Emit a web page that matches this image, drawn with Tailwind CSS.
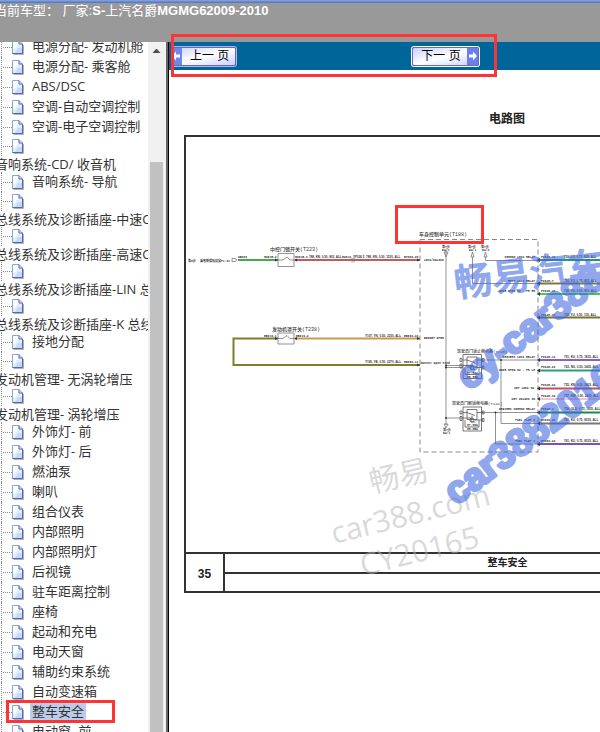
<!DOCTYPE html>
<html lang="zh-CN">
<head>
<meta charset="utf-8">
<meta name="viewport" content="width=device-width, initial-scale=1">
<title>整车安全 - 电路图</title>
<script src="https://cdn.jsdelivr.net/npm/@tailwindcss/browser@4"></script>
</head>
<body class="relative flex h-screen flex-col overflow-hidden bg-white font-['Open_Sans','Noto_Sans_CJK_SC',sans-serif] text-[13px] text-[#333]">

<header class="h-[42px] shrink-0 overflow-hidden bg-[#999] text-white">
  <div class="h-[3px] bg-linear-to-b from-[#8ba6dc] to-[#4a72c8]"></div>
  <h1 class="-ml-[6px] whitespace-pre font-['Liberation_Sans','Noto_Sans_CJK_SC',sans-serif] text-[13px] leading-[15px]">当前车型： 厂家:<b>S-</b>上汽名爵<b>MGMG62009-2010</b></h1>
</header>

<div class="flex min-h-0 flex-1">
  <nav aria-label="目录" class="flex w-[169px] shrink-0 overflow-hidden">
    <ul id="tree" class="-mt-[5px] min-w-0 flex-1 overflow-hidden whitespace-nowrap"></ul>
    <div class="flex w-[18px] shrink-0 flex-col bg-[#f1f1f1] pl-[2px] pr-[3px]" aria-hidden="true">
      <svg class="mt-[6px] h-[5px] w-[13px] shrink-0" viewBox="0 0 13 5"><path d="M2.500 5 6 1h1l3.500 4z" fill="#505050"/></svg>
      <div class="mt-[109px] flex-1 bg-[#c1c1c1]"></div>
    </div>
    <div class="w-[3px] shrink-0 border-r border-black bg-[#666]"></div>
  </nav>

  <main class="min-w-0 flex-1 overflow-hidden">
    <div class="flex h-7 items-center bg-[#069]">
      <button class="ml-[3px] flex h-[19px] items-center overflow-hidden rounded-xs border border-[#6a6ab4] bg-linear-to-br from-[#c9d0fa] via-white to-[#c9d0fa] font-['Liberation_Sans','Noto_Sans_CJK_SC',sans-serif] text-[12px] text-black ring-1 ring-[#b4b4e4]">
        <svg class="h-[18px] w-[9px]" viewBox="0 0 9 18"><path fill="#7088ec" d="M0 0h9v18H0z"/><path fill="#fff" d="M0 8l3-3.500V7.500h4v3H3v3L0 10z"/></svg>
        <span class="whitespace-pre pl-[8px] pr-[6px]">上一 页</span>
      </button>
      <button class="ml-[176px] flex h-[19px] items-center overflow-hidden rounded-xs border border-[#6a6ab4] bg-linear-to-br from-[#c9d0fa] via-white to-[#c9d0fa] font-['Liberation_Sans','Noto_Sans_CJK_SC',sans-serif] text-[12px] text-black ring-1 ring-white">
        <span class="whitespace-pre pl-[8px] pr-[6px]">下一 页</span>
        <svg class="h-[18px] w-[11px]" viewBox="0 0 11 18"><path fill="#6a80ec" d="M0 0h11v18H0z"/><path fill="#fff" d="M10 9 6 4.500v3H2v3h4v3z"/></svg>
      </button>
    </div>

    <article class="ml-[15px] w-[646px] font-['Liberation_Sans','Noto_Sans_CJK_SC',sans-serif] text-[#222]">
      <h2 class="pb-[7px] pt-[40px] text-center text-[12px] font-bold leading-[18px]">电路图</h2>
      <div class="border-2 border-[#333]">
        <svg class="block w-full" viewBox="186 137 642 415" role="img" aria-label="整车安全电路图" font-family="'Liberation Mono','Noto Sans CJK SC',monospace" font-size="3" font-weight="bold" fill="#333">
          <!-- wires -->
          <g fill="none" stroke-width="2">
            <path stroke="#3fae49" d="M238 260h40"/>
            <path stroke="#c45a5a" d="M295 260h125"/>
            <path stroke="#827b2c" d="M278 338.500h-44.500V365H420"/>
            <path stroke="#c99a55" d="M295 338.500h125"/>
            <path stroke="#1f9a78" d="M539 260h260"/>
            <path stroke="#7c7c38" d="M539 283.500h260"/>
            <path stroke="#48cc48" d="M539 294h260"/>
            <path stroke="#7c7432" d="M539 317.500h260"/>
            <path stroke="#8a62b8" d="M539 360h260"/>
            <path stroke="#2e9c78" d="M539 370.500h260"/>
            <path stroke="#c4505c" d="M539 388.500h260"/>
            <path stroke="#ecc4dc" d="M539 399h260"/>
            <path stroke="#1c8a44" d="M539 412.500h260"/>
            <path stroke="#777" d="M539 423.500h260"/>
            <path stroke="#7c54b0" d="M539 444h260"/>
          </g>
          <rect x="420" y="239.500" width="118" height="212.500" fill="none" stroke="#888" stroke-dasharray="5 3"/>
          <!-- internal connections -->
          <g fill="none" stroke="#777" stroke-width=".8">
            <path d="M446 250v175M444 252h4l-2 5zM444 424h4l-2 4z"/>
            <path d="M472.500 257v26.500H538M485.500 257v3.500H538"/>
            <path fill="#fff" d="M471 257h3l-1.500-5zM484 257h3l-1.500-5z"/>
            <path d="M446 365.500h17M446 367.500h17M446 418h17M481 360h57M501 360v63.500h37M481 412.500h57M495.500 412.500V444H538"/>
            <path d="M278 253.500h16v13h-16zM278 260h5l4-3 3 3h4M278 333h16v11h-16zM278 338.500h5l4-3 3 3h4"/>
            <path d="M232 258.500h3l2 1.500-2 1.500h-3zM352 257.500v5M354 257.500v5"/>
          </g>
          <g fill="#333">
            <circle cx="446" cy="365.500" r="1"/><circle cx="446" cy="367.500" r="1"/><circle cx="446" cy="418" r="1"/><circle cx="495.500" cy="412.500" r="1"/><circle cx="501" cy="360" r="1"/>
            <path d="M275 258.500l3 1.500-3 1.500zM297 258.500l-3 1.500 3 1.500zM275 337l3 1.500-3 1.500zM297 337l-3 1.500 3 1.500zM417 258.500l3 1.500-3 1.500zM417 337l3 1.500-3 1.500zM417 363.500l3 1.500-3 1.500z"/>
            <path d="M537 260l3-2v4zM537 283.500l3-2v4zM537 294l3-2v4zM537 317.500l3-2v4zM537 360l3-2v4zM537 370.500l3-2v4zM537 388.500l3-2v4zM537 399l3-2v4zM537 412.500l3-2v4zM537 423.500l3-2v4zM537 444l3-2v4z"/>
          </g>
          <!-- relays -->
          <g id="relay" fill="none" stroke="#555" stroke-width=".8">
            <path d="M463 354.500h18.500v24H463zM467 357h10v10h-10zM463 360h4l8 3M477 360h6M463 365.500h8v4h4M475 367.500h8M465 367.500v7h14v-7M472 363v4M460 358.500h2v3h-2zM460 364h2v4h-2zM482 358.500h2v3h-2zM482 366h2v3h-2z"/>
            <circle cx="472" cy="367.500" r="2"/>
          </g>
          <use href="#relay" y="52.500"/>
          <text x="467" y="373.500">87.86A</text><text x="467" y="377.500">88.85A</text>
          <text x="467" y="426">87.86A</text><text x="467" y="430">88.85A</text>
          <!-- component names -->
          <g font-size="5" font-weight="500">
            <text x="270" y="251">中控门锁开关(T223)</text>
            <text x="272" y="331">发动机罩开关(T238)</text>
            <text x="419" y="236">车身控制单元(T188)</text>
          </g>
          <g font-size="4" font-weight="500">
            <text x="457" y="352.500">驾驶员门锁止继电器(T240)</text>
            <text x="452" y="405">驾驶员门解锁继电器(T241)</text>
          </g>
          <!-- pin labels -->
          <text x="188" y="261.500">第9页</text><text x="200" y="261.500">乘客舱保险丝盒F1.01</text>
          <text x="238" y="257.500">WB203</text><text x="264" y="257.500">HW015-2</text>
          <text x="295" y="257.500">HW015-3</text><text x="342" y="257.500">HW012</text><text x="404" y="257.500">BY063-26</text>
          <text x="264" y="336.500">EB019-1</text><text x="296" y="336.500">EB019-2</text>
          <text x="404" y="336.500">EB063-22</text><text x="404" y="362.500">EB063-11</text>
          <text x="424" y="260.500">LOCK/UNLOCK</text><text x="424" y="339">BONNET OPEN</text><text x="421" y="364">Bonnet Open Tend</text>
          <text x="442" y="248">第7页</text><text x="442" y="251">D4/1</text><text x="468" y="248">第7页</text><text x="469" y="251">D4/1</text><text x="481" y="248">第7页</text><text x="482" y="251">D4/2</text>
          <text x="443" y="431">第7页</text><text x="443" y="434">D4/1</text>
          <g text-anchor="end">
            <text x="535" y="258">COMMON LOCK RELAY</text><text x="535" y="281.500">REST LOCK RELAY</text><text x="535" y="292">DOOR OPEN SW - FR RH</text>
            <text x="535" y="357.500">DRIVERS LOCK RELAY</text><text x="535" y="370.500">DOOR OPEN SW - FR LH</text><text x="534" y="388.500">KEY LOCK SW</text><text x="535" y="399.500">KEY UNLOCK SW</text>
            <text x="535" y="409.500">DRIVERS COMMON RELAY</text><text x="535" y="420.500">FUEL FLAP 2</text><text x="535" y="441.500">FUEL FLAP 1</text>
          </g>
          <text x="541" y="258">FC048-33</text><text x="541" y="281.500">FC048-7</text><text x="541" y="292">FC048-22</text><text x="541" y="315.500">FC048-17</text>
          <text x="541" y="357.500">FC048-12</text><text x="541" y="368">FC048-23</text><text x="541" y="386">FC048-24</text><text x="541" y="396.500">FC048-34</text>
          <text x="541" y="410">FC048-3</text><text x="541" y="421">BY063-20</text><text x="541" y="441.500">BY063-23</text>
          <!-- wire labels -->
          <g font-family="'Liberation Sans',sans-serif">
            <text x="309" y="257.500">788, KN, 0.50, 805, ALL</text><text x="353" y="257.500">YP026 5</text><text x="366" y="257.500">788, KN, 0.50, 1520, ALL</text>
            <text x="365" y="336.500">Y107, YN, 0.50, 2230, ALL</text><text x="365" y="362.500">Y195, YB, 0.50, 2270, ALL</text>
            <text x="564" y="258">750, LG, 0.75, 830, ALL</text>
            <text x="564" y="281.500">750, YO, 0.75, 835, ALL</text>
            <text x="564" y="292">726, YG, 0.50, 910, ALL</text>
            <text x="564" y="315.500">728, YU, 0.50, 130, ALL</text>
            <text x="564" y="357.500">751, KU, 0.75, 1835, ALL</text>
            <text x="564" y="368">763, NG, 0.50, 2405, ALL</text>
            <text x="564" y="386">755, KN, 0.50, 2405, ALL</text>
            <text x="564" y="396.500">757, KW, 0.50, 2435, ALL</text>
            <text x="564" y="410">758, GLG, 0.75, 1835, ALL</text>
            <text x="564" y="421">760, KU, 0.75, 8335, ALL</text>
            <text x="564" y="441.500">761, KU, 0.75, 8335, ALL</text>
          </g>
        </svg>
        <table class="w-full border-collapse border-t-2 border-[#333] text-center font-bold">
          <tbody>
            <tr class="h-5">
              <th rowspan="2" class="w-[38px] border-r-2 border-[#333] p-0 pt-[3px] text-[12px]">35</th>
              <td class="border-b-2 border-[#333] p-0 text-[10px] leading-[16px]">整车安全</td>
              <td class="w-[38px] border-b-2 border-[#333] p-0"></td>
            </tr>
            <tr class="h-[18px]"><td colspan="2" class="p-0"></td></tr>
          </tbody>
        </table>
      </div>
    </article>
  </main>
</div>

<!-- watermarks over the drawing -->
<svg class="pointer-events-none absolute left-0 top-0" width="600" height="732" viewBox="0 0 600 732" font-family="'Open Sans','Noto Sans CJK SC',sans-serif">
  <g fill="#b4b4b4" fill-opacity=".5" font-size="30">
    <text transform="translate(372 493) rotate(-13)">畅易</text>
    <text transform="translate(334 544) rotate(-14)">car388.com</text>
    <text transform="translate(363 576) rotate(-14)">CY20165</text>
  </g>
  <g fill="#4169e1" stroke="#4169e1" stroke-linejoin="round" opacity=".58" font-family="'Liberation Sans','Noto Sans CJK SC',sans-serif" font-weight="bold">
    <text transform="translate(456 297) rotate(-7)" font-size="38" font-weight="500" stroke-width="1">畅易汽车</text>
    <text transform="translate(469 391) rotate(-38)" font-size="38" stroke-width="3">cy-car388</text>
    <text transform="translate(456 506) rotate(-37)" font-size="38" stroke-width="3">car38820165</text>
  </g>
</svg>

<!-- highlight frames -->
<div class="pointer-events-none absolute left-[171px] top-[34px] h-[43px] w-[326px] border-3 border-[#ff3333]"></div>
<div class="pointer-events-none absolute left-[395px] top-[205px] h-[39px] w-[89px] border-3 border-[#ff3333]"></div>
<div class="pointer-events-none absolute left-[6px] top-[700px] h-[23px] w-[109px] border-3 border-[#ff3333]"></div>

<svg class="hidden">
  <symbol id="page" viewBox="0 0 12 15">
    <path d="M1.500 14.500h10V5" fill="none" stroke="#b0b0c0"/>
    <path d="M.5.5H7L10.500 4v9.500H.5z" fill="#e2edfc" stroke="#8aa4d4"/>
    <path d="M1 1h5v3L3 9H1z" fill="#fff"/>
    <path d="M6 8h4v5H3z" fill="#c4daf8"/>
    <path d="M7 .5V4h3.500v9.500H.5" fill="none" stroke="#5468b0"/>
  </symbol>
</svg>

<script>
  // kind: "i" = leaf with page icon, "s" = selected leaf, "e" = leaf without a caption, "g" = group caption
  const rows = [
    ["i","电源分配- 发动机舱"],["i","电源分配- 乘客舱"],["i","ABS/DSC"],["i","空调-自动空调控制"],["i","空调-电子空调控制"],["e"],
    ["g","音响系统-CD/ 收音机"],["i","音响系统- 导航"],["e"],
    ["g","总线系统及诊断插座-中速CAN 总线"],["e"],
    ["g","总线系统及诊断插座-高速CAN 总线"],["e"],
    ["g","总线系统及诊断插座-LIN 总线"],["e"],
    ["g","总线系统及诊断插座-K 总线"],["i","接地分配"],["e"],
    ["g","发动机管理- 无涡轮增压"],["e"],
    ["g","发动机管理- 涡轮增压"],
    ["i","外饰灯- 前"],["i","外饰灯- 后"],["i","燃油泵"],["i","喇叭"],["i","组合仪表"],["i","内部照明"],["i","内部照明灯"],["i","后视镜"],
    ["i","驻车距离控制"],["i","座椅"],["i","起动和充电"],["i","电动天窗"],["i","辅助约束系统"],["i","自动变速箱"],["s","整车安全"],["i","电动窗- 前"]
  ];
  const icon = '<span class="ml-[1px] w-[2px] self-stretch border-l border-dotted border-[#888]"></span><span class="w-[9px] border-t border-dotted border-[#888]"></span><svg class="h-[15px] w-[12px] shrink-0" aria-hidden="true"><use href="#page"/></svg>';
  document.getElementById("tree").innerHTML = rows.map(([kind, text]) => {
    if (kind === "g") return `<li class="-ml-[5px] h-4 leading-4"><a href="#">${text}</a></li>`;
    if (kind === "e") return `<li class="flex h-[19px] items-center">${icon}</li>`;
    if (kind === "s") return `<li class="flex h-5 items-center">${icon}<a href="#" aria-current="page" class="mb-[2px] ml-[6px] bg-[#bccbe8] px-[2px] leading-[18px]">${text}</a></li>`;
    return `<li class="flex h-5 items-center">${icon}<a href="#" class="mb-[2px] ml-[6px] px-[2px] leading-[18px]">${text}</a></li>`;
  }).join("");
</script>
</body>
</html>
